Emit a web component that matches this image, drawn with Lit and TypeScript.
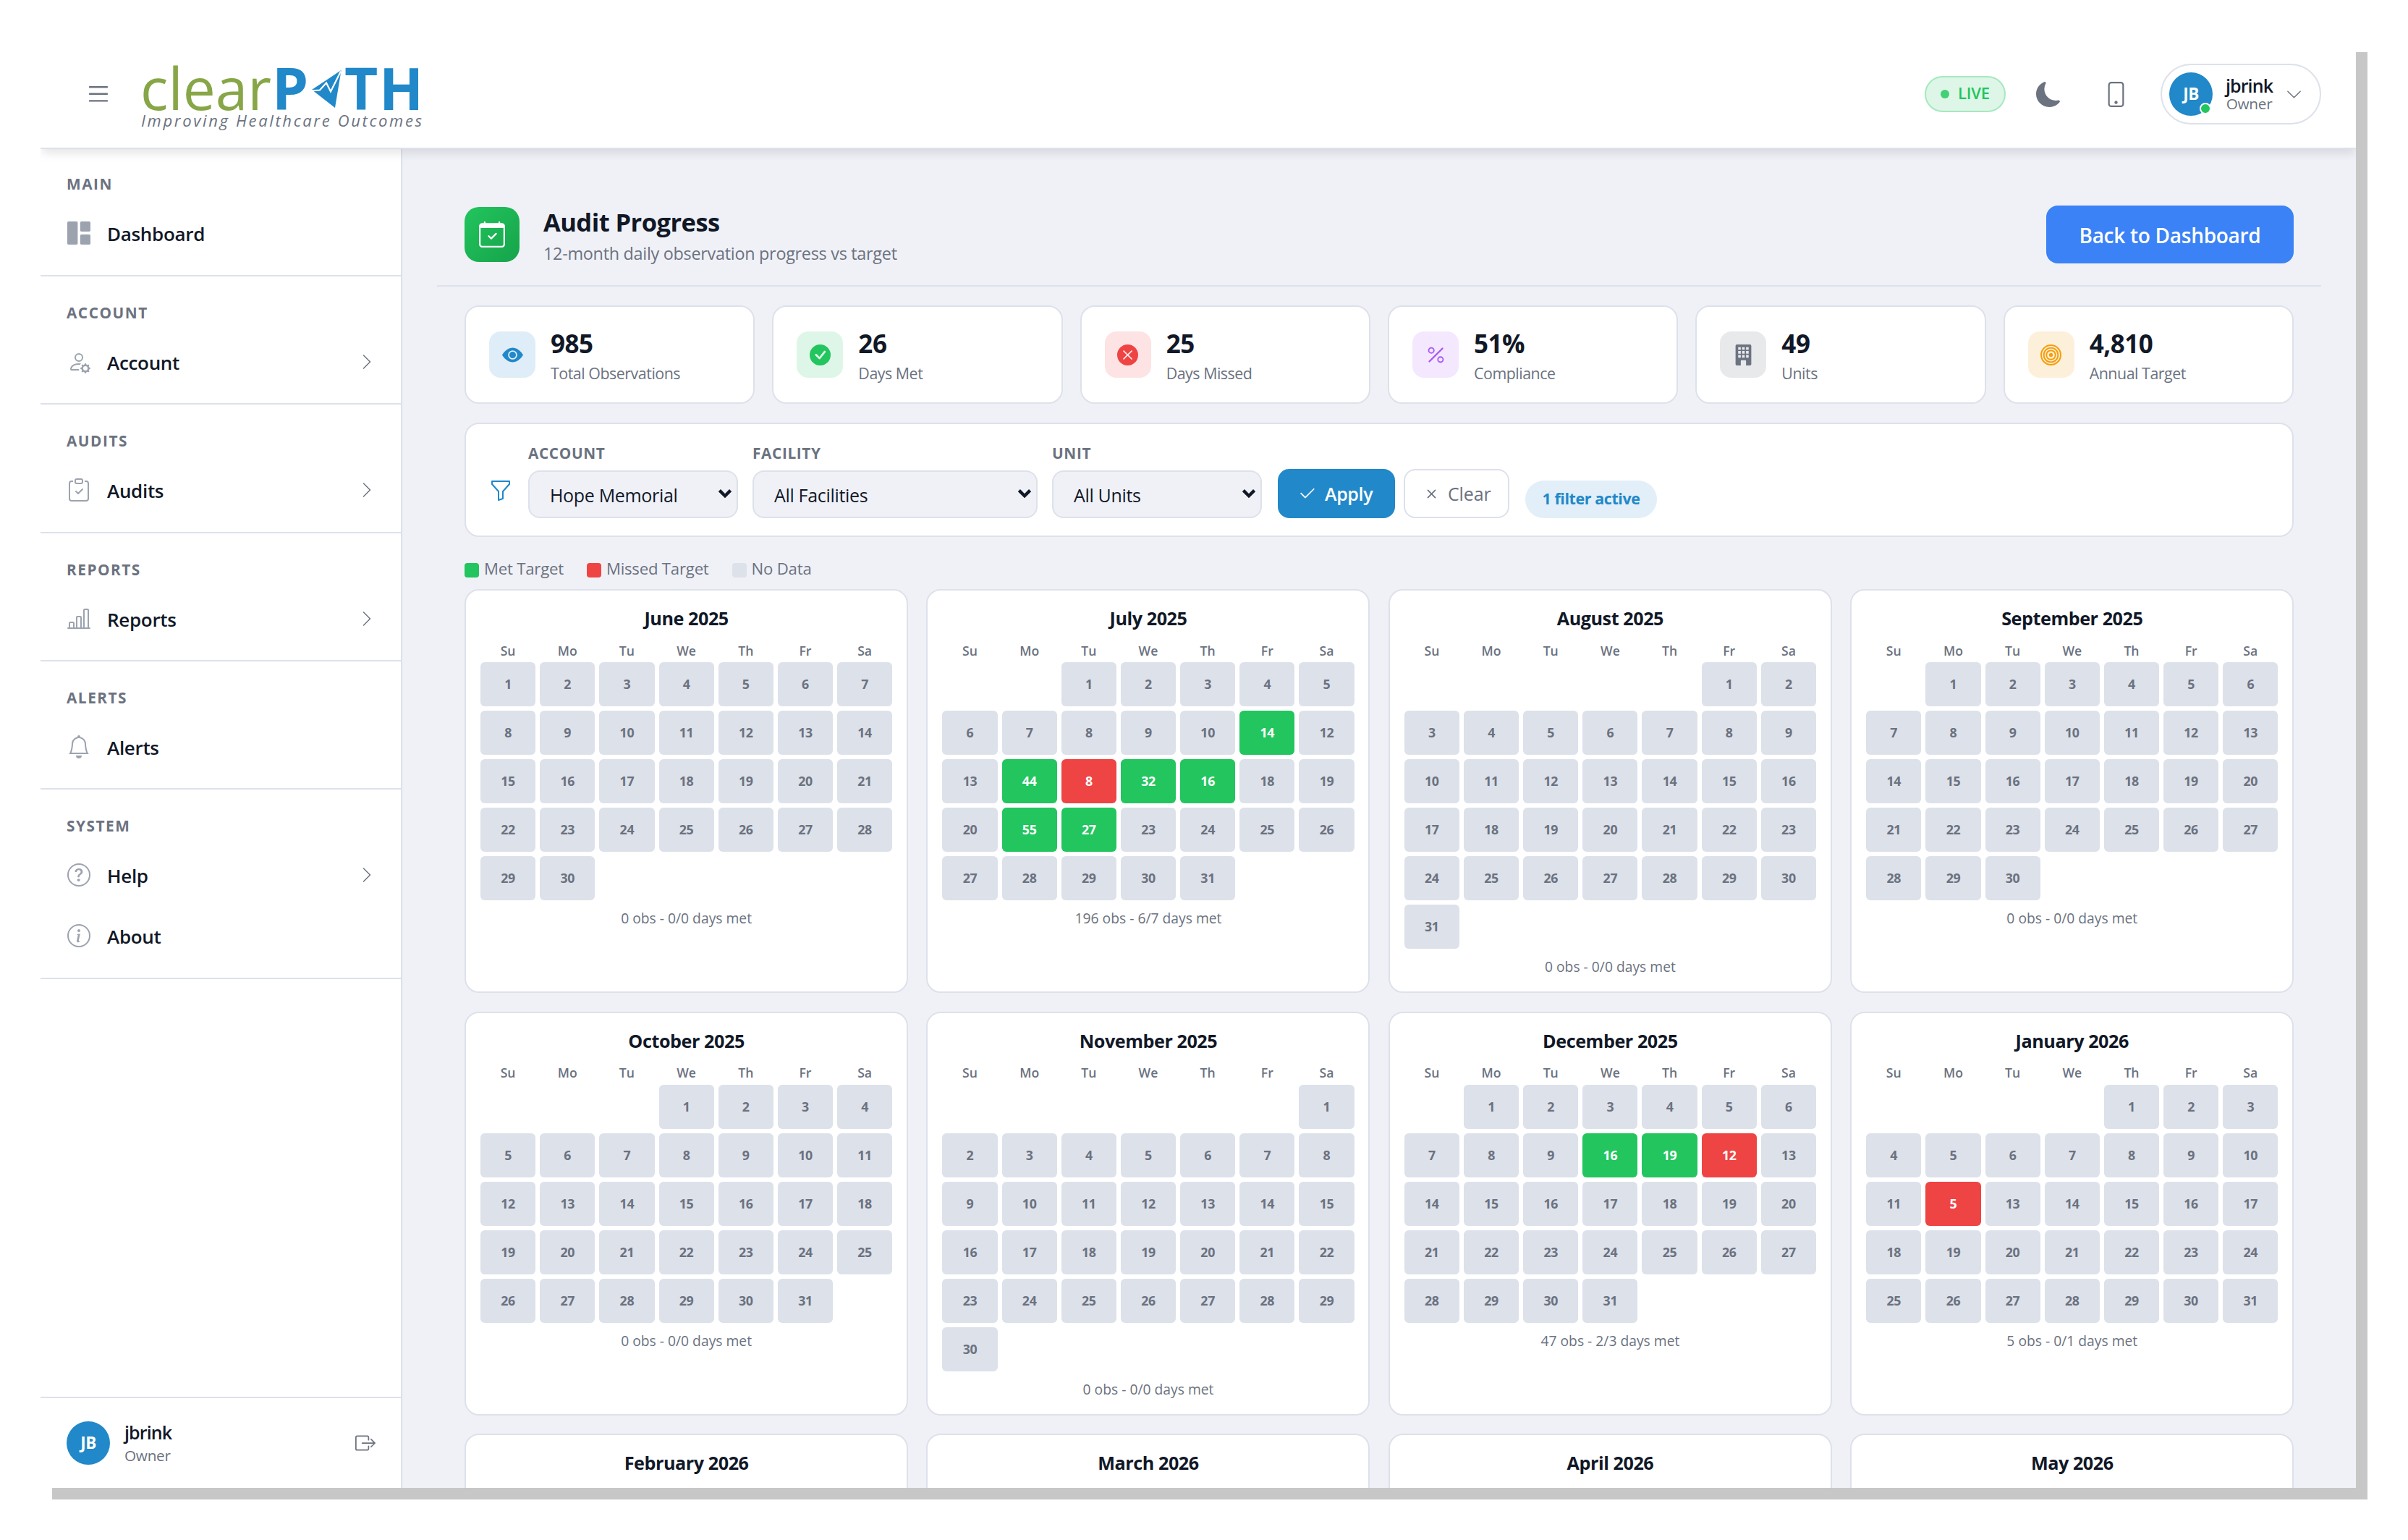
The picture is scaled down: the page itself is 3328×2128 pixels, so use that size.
import { LitElement, html, css, svg, nothing } from 'lit';
import type { TemplateResult, SVGTemplateResult } from 'lit';

const ring = svg`<circle cx="8" cy="8" r="7.5" fill="none" stroke="currentColor" />`;

const ICONS: Record<string, SVGTemplateResult> = {
  moon: svg`<path d="M6 .278a.77.77 0 0 1 .08.858 7.2 7.2 0 0 0-.878 3.46c0 4.021 3.278 7.277 7.318 7.277q.792-.001 1.533-.16a.79.79 0 0 1 .81.316.73.73 0 0 1-.031.893A8.35 8.35 0 0 1 8.344 16C3.734 16 0 12.286 0 7.71 0 4.266 2.114 1.312 5.124.06A.75.75 0 0 1 6 .278" />`,
  phone: svg`<path d="M11 1a1 1 0 0 1 1 1v12a1 1 0 0 1-1 1H5a1 1 0 0 1-1-1V2a1 1 0 0 1 1-1zM5 0a2 2 0 0 0-2 2v12a2 2 0 0 0 2 2h6a2 2 0 0 0 2-2V2a2 2 0 0 0-2-2z" /><circle cx="8" cy="13" r="1" />`,
  'chevron-down': svg`<path d="M1.646 4.646a.5.5 0 0 1 .708 0L8 10.293l5.646-5.647a.5.5 0 0 1 .708.708l-6 6a.5.5 0 0 1-.708 0l-6-6a.5.5 0 0 1 0-.708" />`,
  'chevron-right': svg`<path d="M4.646 1.646a.5.5 0 0 1 .708 0l6 6a.5.5 0 0 1 0 .708l-6 6a.5.5 0 0 1-.708-.708L10.293 8 4.646 2.354a.5.5 0 0 1 0-.708" />`,
  dashboard: svg`<rect x="0" y="0" width="7.2" height="16" rx=".9" /><rect x="8.9" y="0" width="7.1" height="7" rx=".9" /><rect x="8.9" y="9" width="7.1" height="7" rx=".9" />`,
  account: svg`<path d="M11 5a3 3 0 1 1-6 0 3 3 0 0 1 6 0M8 7a2 2 0 1 0 0-4 2 2 0 0 0 0 4m.256 7a4.5 4.5 0 0 1-.229-1.004H3c.001-.246.154-.986.832-1.664C4.484 10.68 5.711 10 8 10q.39 0 .74.025c.226-.341.496-.65.804-.918Q8.844 9.002 8 9c-5 0-6 3-6 4s1 1 1 1zm3.63-4.54c.18-.613 1.048-.613 1.229 0l.043.148a.64.64 0 0 0 .921.382l.136-.074c.561-.306 1.175.308.87.869l-.075.136a.64.64 0 0 0 .382.92l.149.045c.612.18.612 1.048 0 1.229l-.15.043a.64.64 0 0 0-.38.921l.074.136c.305.561-.309 1.175-.87.87l-.136-.075a.64.64 0 0 0-.92.382l-.045.149c-.18.612-1.048.612-1.229 0l-.043-.15a.64.64 0 0 0-.921-.38l-.136.074c-.561.305-1.175-.309-.87-.87l.075-.136a.64.64 0 0 0-.382-.92l-.148-.045c-.613-.18-.613-1.048 0-1.229l.148-.043a.64.64 0 0 0 .382-.921l-.074-.136c-.306-.561.308-1.175.869-.87l.136.075a.64.64 0 0 0 .92-.382zM14 12.5a1.5 1.5 0 1 0-3 0 1.5 1.5 0 0 0 3 0" />`,
  audits: svg`<path d="M10.854 7.146a.5.5 0 0 1 0 .708l-3 3a.5.5 0 0 1-.708 0l-1.5-1.5a.5.5 0 1 1 .708-.708L7.5 9.793l2.646-2.647a.5.5 0 0 1 .708 0" /><path d="M4 1.5H3a2 2 0 0 0-2 2V14a2 2 0 0 0 2 2h10a2 2 0 0 0 2-2V3.5a2 2 0 0 0-2-2h-1v1h1a1 1 0 0 1 1 1V14a1 1 0 0 1-1 1H3a1 1 0 0 1-1-1V3.5a1 1 0 0 1 1-1h1z" /><path d="M9.5 1a.5.5 0 0 1 .5.5v1a.5.5 0 0 1-.5.5h-3a.5.5 0 0 1-.5-.5v-1a.5.5 0 0 1 .5-.5zm-3-1A1.5 1.5 0 0 0 5 1.5v1A1.5 1.5 0 0 0 6.5 4h3A1.5 1.5 0 0 0 11 2.5v-1A1.5 1.5 0 0 0 9.5 0z" />`,
  reports: svg`<path d="M11 2a1 1 0 0 1 1-1h2a1 1 0 0 1 1 1v12h.5a.5.5 0 0 1 0 1H.5a.5.5 0 0 1 0-1H1v-3a1 1 0 0 1 1-1h2a1 1 0 0 1 1 1v3h1V7a1 1 0 0 1 1-1h2a1 1 0 0 1 1 1v7h1zm1 12h2V2h-2zm-3 0V7H7v7zm-5 0v-3H2v3z" />`,
  bell: svg`<path d="M8 16a2 2 0 0 0 2-2H6a2 2 0 0 0 2 2M8 1.918l-.797.161A4 4 0 0 0 4 6c0 .628-.134 2.197-.459 3.742-.16.767-.376 1.566-.663 2.258h10.244c-.287-.692-.502-1.49-.663-2.258C12.134 8.197 12 6.628 12 6a4 4 0 0 0-3.203-3.92zM14.22 12c.223.447.481.801.78 1H1c.299-.199.557-.553.78-1C2.68 10.2 3 6.88 3 6c0-2.42 1.72-4.44 4.005-4.901a1 1 0 1 1 1.99 0A5 5 0 0 1 13 6c0 .88.32 4.2 1.22 6" />`,
  help: svg`${ring}<path d="M5.255 5.786a.237.237 0 0 0 .241.247h.825c.138 0 .248-.113.266-.25.09-.656.54-1.134 1.342-1.134.686 0 1.314.343 1.314 1.168 0 .635-.374.927-.965 1.371-.673.489-1.206 1.06-1.168 1.987l.003.217a.25.25 0 0 0 .25.246h.811a.25.25 0 0 0 .25-.25v-.105c0-.718.273-.927 1.01-1.486.609-.463 1.244-.977 1.244-2.056 0-1.511-1.276-2.241-2.673-2.241-1.267 0-2.655.59-2.75 2.286m1.557 5.763c0 .533.425.927 1.01.927.609 0 1.028-.394 1.028-.927 0-.552-.42-.94-1.029-.94-.584 0-1.009.388-1.009.94" />`,
  info: svg`${ring}<path d="m8.93 6.588-2.29.287-.082.38.45.083c.294.07.352.176.288.469l-.738 3.468c-.194.897.105 1.319.808 1.319.545 0 1.178-.252 1.465-.598l.088-.416c-.2.176-.492.246-.686.246-.275 0-.375-.193-.304-.533zM9 4.5a1 1 0 1 1-2 0 1 1 0 0 1 2 0" />`,
  logout: svg`<path fill-rule="evenodd" d="M10 12.5a.5.5 0 0 1-.5.5h-8a.5.5 0 0 1-.5-.5v-9a.5.5 0 0 1 .5-.5h8a.5.5 0 0 1 .5.5v2a.5.5 0 0 0 1 0v-2A1.5 1.5 0 0 0 9.5 2h-8A1.5 1.5 0 0 0 0 3.5v9A1.5 1.5 0 0 0 1.5 14h8a1.5 1.5 0 0 0 1.5-1.5v-2a.5.5 0 0 0-1 0z" /><path fill-rule="evenodd" d="M15.854 8.354a.5.5 0 0 0 0-.708l-3-3a.5.5 0 0 0-.708.708L14.293 7.5H5.5a.5.5 0 0 0 0 1h8.793l-2.147 2.146a.5.5 0 0 0 .708.708z" />`,
  calendar: svg`<path d="M10.854 7.146a.5.5 0 0 1 0 .708l-3 3a.5.5 0 0 1-.708 0l-1.5-1.5a.5.5 0 1 1 .708-.708L7.5 9.793l2.646-2.647a.5.5 0 0 1 .708 0" /><path d="M3.5 0a.5.5 0 0 1 .5.5V1h8V.5a.5.5 0 0 1 1 0V1h1a2 2 0 0 1 2 2v11a2 2 0 0 1-2 2H2a2 2 0 0 1-2-2V3a2 2 0 0 1 2-2h1V.5a.5.5 0 0 1 .5-.5M1 4v10a1 1 0 0 0 1 1h12a1 1 0 0 0 1-1V4z" />`,
  eye: svg`<path d="M10.5 8a2.5 2.5 0 1 1-5 0 2.5 2.5 0 0 1 5 0" /><path d="M0 8s3-5.5 8-5.5S16 8 16 8s-3 5.5-8 5.5S0 8 0 8m8 3.5a3.5 3.5 0 1 0 0-7 3.5 3.5 0 0 0 0 7" />`,
  'check-circle': svg`<path d="M16 8A8 8 0 1 1 0 8a8 8 0 0 1 16 0m-3.97-3.03a.75.75 0 0 0-1.08.022L7.477 9.417 5.384 7.323a.75.75 0 0 0-1.06 1.06L6.97 11.03a.75.75 0 0 0 1.079-.02l3.992-4.99a.75.75 0 0 0-.01-1.05z" />`,
  'x-circle': svg`<path d="M16 8A8 8 0 1 1 0 8a8 8 0 0 1 16 0M5.354 4.646a.5.5 0 1 0-.708.708L7.293 8l-2.647 2.646a.5.5 0 0 0 .708.708L8 8.707l2.646 2.647a.5.5 0 0 0 .708-.708L8.707 8l2.647-2.646a.5.5 0 0 0-.708-.708L8 7.293z" />`,
  percent: svg`<path d="M13.442 2.558a.625.625 0 0 1 0 .884l-10 10a.625.625 0 1 1-.884-.884l10-10a.625.625 0 0 1 .884 0M4.5 6a1.5 1.5 0 1 1 0-3 1.5 1.5 0 0 1 0 3m0 1a2.5 2.5 0 1 0 0-5 2.5 2.5 0 0 0 0 5m7 6a1.5 1.5 0 1 1 0-3 1.5 1.5 0 0 1 0 3m0 1a2.5 2.5 0 1 0 0-5 2.5 2.5 0 0 0 0 5" />`,
  building: svg`<path fill-rule="evenodd" d="M3 0a1 1 0 0 0-1 1v14a1 1 0 0 0 1 1h3v-3.5a.5.5 0 0 1 .5-.5h3a.5.5 0 0 1 .5.5V16h3a1 1 0 0 0 1-1V1a1 1 0 0 0-1-1zM4 2h2v2H4zM7 2h2v2H7zM10 2h2v2h-2zM4 5h2v2H4zM7 5h2v2H7zM10 5h2v2h-2zM4 8h2v2H4zM7 8h2v2H7zM10 8h2v2h-2z" />`,
  bullseye: svg`<circle cx="8" cy="8" r="7.45" fill="none" stroke="currentColor" stroke-width="1.1" /><circle cx="8" cy="8" r="5.45" fill="none" stroke="currentColor" stroke-width="1.1" /><circle cx="8" cy="8" r="3.45" fill="none" stroke="currentColor" stroke-width="1.1" /><circle cx="8" cy="8" r="1.5" />`,
  funnel: svg`<path d="M1.5 1.5A.5.5 0 0 1 2 1h12a.5.5 0 0 1 .5.5v2a.5.5 0 0 1-.128.334L10 8.692V13.5a.5.5 0 0 1-.342.474l-3 1A.5.5 0 0 1 6 14.5V8.692L1.628 3.834A.5.5 0 0 1 1.5 3.5zm1 .5v1.308l4.372 4.858A.5.5 0 0 1 7 8.5v5.306l2-.666V8.5a.5.5 0 0 1 .128-.334L13.5 3.308V2z" />`,
  check: svg`<path d="M13.854 3.646a.5.5 0 0 1 0 .708l-7 7a.5.5 0 0 1-.708 0l-3.5-3.5a.5.5 0 1 1 .708-.708L6.5 10.293l6.646-6.647a.5.5 0 0 1 .708 0" />`,
  x: svg`<path d="M4.646 4.646a.5.5 0 0 1 .708 0L8 7.293l2.646-2.647a.5.5 0 0 1 .708.708L8.707 8l2.647 2.646a.5.5 0 0 1-.708.708L8 8.707l-2.646 2.647a.5.5 0 0 1-.708-.708L7.293 8 4.646 5.354a.5.5 0 0 1 0-.708" />`,
};

const icon = (name: string, cls = ''): TemplateResult =>
  html`<svg class="icon ${cls}" viewBox="0 0 16 16" fill="currentColor">${ICONS[name]}</svg>`;

const NAV = [
  { title: 'Main', items: [{ icon: 'dashboard', label: 'Dashboard', more: false }] },
  { title: 'Account', items: [{ icon: 'account', label: 'Account', more: true }] },
  { title: 'Audits', items: [{ icon: 'audits', label: 'Audits', more: true }] },
  { title: 'Reports', items: [{ icon: 'reports', label: 'Reports', more: true }] },
  { title: 'Alerts', items: [{ icon: 'bell', label: 'Alerts', more: false }] },
  {
    title: 'System',
    items: [
      { icon: 'help', label: 'Help', more: true },
      { icon: 'info', label: 'About', more: false },
    ],
  },
];

const STATS = [
  { icon: 'eye', tone: 'blue', value: '985', label: 'Total Observations' },
  { icon: 'check-circle', tone: 'green', value: '26', label: 'Days Met' },
  { icon: 'x-circle', tone: 'red', value: '25', label: 'Days Missed' },
  { icon: 'percent', tone: 'purple', value: '51%', label: 'Compliance' },
  { icon: 'building', tone: 'gray', value: '49', label: 'Units' },
  { icon: 'bullseye', tone: 'amber', value: '4,810', label: 'Annual Target' },
];

const FILTERS = [
  { label: 'Account', value: 'Hope Memorial', size: '' },
  { label: 'Facility', value: 'All Facilities', size: 'wide' },
  { label: 'Unit', value: 'All Units', size: '' },
];

interface DayResult {
  count: number;
  met: boolean;
}

interface Month {
  year: number;
  month: number;
  summary?: string;
  results?: Record<number, DayResult>;
}

const met = (count: number): DayResult => ({ count, met: true });
const missed = (count: number): DayResult => ({ count, met: false });
const NO_OBS = '0 obs - 0/0 days met';

// months without a summary are not loaded yet and only show their title
const MONTHS: Month[] = [
  { year: 2025, month: 5, summary: NO_OBS },
  {
    year: 2025,
    month: 6,
    summary: '196 obs - 6/7 days met',
    results: { 11: met(14), 14: met(44), 15: missed(8), 16: met(32), 17: met(16), 21: met(55), 22: met(27) },
  },
  { year: 2025, month: 7, summary: NO_OBS },
  { year: 2025, month: 8, summary: NO_OBS },
  { year: 2025, month: 9, summary: NO_OBS },
  { year: 2025, month: 10, summary: NO_OBS },
  {
    year: 2025,
    month: 11,
    summary: '47 obs - 2/3 days met',
    results: { 10: met(16), 11: met(19), 12: missed(12) },
  },
  { year: 2026, month: 0, summary: '5 obs - 0/1 days met', results: { 12: missed(5) } },
  { year: 2026, month: 1 },
  { year: 2026, month: 2 },
  { year: 2026, month: 3 },
  { year: 2026, month: 4 },
];

const MONTH_NAMES = [
  'January', 'February', 'March', 'April', 'May', 'June',
  'July', 'August', 'September', 'October', 'November', 'December',
];
const WEEKDAYS = ['Su', 'Mo', 'Tu', 'We', 'Th', 'Fr', 'Sa'];

export class MonthCard extends LitElement {
  static properties = {
    data: { attribute: false },
  };

  declare data: Month;

  static styles = css`
    :host {
      display: block;
      box-sizing: border-box;
      height: 558px;
      padding: 19px 19.6px 19.2px 20px;
      background: #fff;
      border: 2px solid #dde1ea;
      border-radius: 20px;
      text-align: center;
    }

    .title {
      margin-bottom: 9.2px;
      font-size: 25.2px;
      font-weight: 700;
      line-height: 38.4px;
      letter-spacing: -0.018em;
      color: #111827;
    }

    .grid {
      display: grid;
      grid-template-columns: repeat(7, 1fr);
      gap: 6px;
    }

    .weekdays {
      font-size: 17.6px;
      font-weight: 650;
      line-height: 32.8px;
      color: #6b7280;
    }

    .day {
      height: 61px;
      border-radius: 6px;
      background: #dde1ea;
      color: #6b7280;
      font-size: 17.8px;
      font-weight: 700;
      line-height: 60px;
      letter-spacing: -0.02em;
    }

    .day.met {
      background: #22c55e;
      color: #fff;
    }

    .day.missed {
      background: #ef4444;
      color: #fff;
    }

    .summary {
      margin-top: 11px;
      font-size: 19.3px;
      line-height: 28.8px;
      color: #6b7280;
    }
  `;

  private _body() {
    const { year, month, summary, results = {} } = this.data;
    const offset = new Date(year, month, 1).getDay();
    const total = new Date(year, month + 1, 0).getDate();
    const blanks = Array.from({ length: offset }, () => html`<span></span>`);
    const days = Array.from({ length: total }, (_, i) => {
      const result = results[i + 1];
      const state = result ? (result.met ? 'met' : 'missed') : '';
      return html`<div class="day ${state}">${result ? result.count : i + 1}</div>`;
    });
    return html`
      <div class="grid weekdays">${WEEKDAYS.map(d => html`<span>${d}</span>`)}</div>
      <div class="grid">${blanks}${days}</div>
      <div class="summary">${summary}</div>
    `;
  }

  protected render() {
    const { year, month, summary } = this.data;
    return html`
      <div class="title">${MONTH_NAMES[month]} ${year}</div>
      ${summary ? this._body() : nothing}
    `;
  }
}

customElements.define('month-card', MonthCard);

export class AppRoot extends LitElement {
  static styles = css`
    :host {
      --border: #dde1ea;
      --text: #111827;
      --muted: #6b7280;
      --brand: #2188c9;
      display: block;
      box-sizing: border-box;
      width: 3328px;
      height: 2128px;
      padding: 56px;
      overflow: hidden;
      background: #fff;
      color: var(--text);
      font-family: 'Open Sans', 'Noto Sans', sans-serif;
      font-stretch: 95%;
    }

    * {
      box-sizing: border-box;
    }

    .window {
      display: flex;
      flex-direction: column;
      width: 3200px;
      height: 2000px;
      overflow: hidden;
      background: #fff;
      box-shadow: 16px 16px 0 #c7c7c7;
    }

    .icon {
      display: block;
      flex: none;
      width: 32px;
      height: 32px;
    }

    /* top bar */
    .topbar {
      position: relative;
      z-index: 1;
      display: flex;
      align-items: center;
      flex: none;
      height: 150px;
      padding: 0 48px 0 60px;
      background: #fff;
      border-bottom: 2px solid var(--border);
      box-shadow: 0 8px 12px -2px rgba(0, 0, 0, 0.1);
    }

    .menu {
      width: 40px;
      height: 40px;
      color: var(--muted);
    }

    .logo {
      display: block;
      width: 400px;
      height: 110px;
      margin-left: 34px;
    }

    .logo .clear {
      font-size: 80px;
      fill: #87a647;
    }

    .logo .path {
      font-size: 80px;
      font-weight: 700;
      fill: var(--brand);
    }

    .logo .tagline {
      font-size: 22px;
      font-style: italic;
      fill: var(--muted);
    }

    .spacer {
      flex: 1;
    }

    .live {
      display: flex;
      align-items: center;
      gap: 12px;
      width: 112px;
      height: 50px;
      padding-left: 20px;
      border: 2px solid #a6e8bf;
      border-radius: 25px;
      background: #def6e7;
      color: #22c55e;
      font-size: 22px;
      font-weight: 600;
      line-height: 44px;
      letter-spacing: -0.01em;
    }

    .live span {
      margin-top: -4px;
    }

    .live::before {
      content: '';
      width: 12px;
      height: 12px;
      border-radius: 50%;
      background: #42cf76;
    }

    .moon,
    .phone {
      width: 35px;
      height: 35px;
      color: var(--muted);
    }

    .moon {
      margin-left: 42px;
    }

    .phone {
      margin-left: 58px;
    }

    .user {
      display: flex;
      align-items: center;
      width: 222px;
      height: 84px;
      margin-left: 44px;
      padding-left: 10px;
      border: 2px solid var(--border);
      border-radius: 42px;
    }

    .avatar {
      position: relative;
      flex: none;
      width: 60px;
      height: 60px;
      border-radius: 50%;
      background: var(--brand);
      color: #fff;
      font-size: 22.5px;
      font-weight: 700;
      line-height: 60px;
      text-align: center;
      letter-spacing: -0.02em;
    }

    .online {
      position: absolute;
      right: 2px;
      bottom: 2px;
      width: 16px;
      height: 16px;
      border: 2px solid #fff;
      border-radius: 50%;
      background: #22c55e;
    }

    .user .who {
      width: 101px;
      text-align: center;
    }

    .name {
      font-size: 25px;
      font-weight: 600;
      line-height: 26px;
      letter-spacing: -0.035em;
    }

    .role {
      font-size: 20.8px;
      line-height: 24px;
      letter-spacing: -0.015em;
      color: var(--muted);
    }

    .user .icon {
      width: 23px;
      height: 23px;
      color: var(--muted);
    }

    /* sidebar */
    .body {
      display: flex;
      flex: 1;
      min-height: 0;
    }

    .sidebar {
      display: flex;
      flex-direction: column;
      flex: none;
      width: 500px;
      border-right: 2px solid var(--border);
      background: #fff;
    }

    nav {
      flex: 1;
      margin-top: -1.6px;
    }

    .section {
      padding: 35px 0 15.4px;
      border-bottom: 2px solid var(--border);
    }

    .section h3 {
      margin: 0 0 11px;
      padding-left: 36px;
      font-size: 20.8px;
      font-weight: 700;
      line-height: 30px;
      letter-spacing: 0.073em;
      text-transform: uppercase;
      color: var(--muted);
    }

    .item {
      display: flex;
      align-items: center;
      height: 84px;
      padding: 0 35px 0 37px;
      font-size: 26px;
      font-weight: 550;
      letter-spacing: -0.012em;
    }

    .item .icon {
      color: #9ca3af;
    }

    .item .label {
      flex: 1;
      margin: 2px 0 0 23px;
    }

    .item .chevron {
      width: 24px;
      height: 24px;
      color: var(--muted);
    }

    .account {
      display: flex;
      align-items: center;
      height: 126px;
      padding: 0 35px 0 36px;
      border-top: 2px solid var(--border);
    }

    .account .who {
      flex: 1;
      margin: 0 0 0 20px;
    }

    .account .name {
      line-height: 34px;
    }

    .account .role {
      line-height: 30px;
    }

    .account .icon {
      width: 28px;
      height: 28px;
      color: var(--muted);
    }

    /* main */
    main {
      flex: 1;
      min-width: 0;
      overflow: hidden;
      padding: 78px 48px 0;
      background: #f0f1f7;
    }

    .page-header {
      display: flex;
      align-items: center;
      height: 112px;
      padding: 0 38px 30px;
      border-bottom: 2px solid var(--border);
    }

    .page-icon {
      display: grid;
      place-items: center;
      width: 76px;
      height: 76px;
      border-radius: 20px;
      background: linear-gradient(135deg, #22c55e, #16a34a);
      color: #fff;
    }

    .page-icon .icon {
      width: 36px;
      height: 36px;
    }

    .heading {
      flex: 1;
      margin: 7px 0 0 33px;
    }

    h1 {
      margin: 0;
      font-size: 34.5px;
      font-weight: 700;
      line-height: 46px;
      letter-spacing: -0.016em;
    }

    .subtitle {
      font-size: 23.4px;
      line-height: 41px;
      letter-spacing: -0.012em;
      color: var(--muted);
    }

    .back {
      width: 342px;
      height: 80px;
      border-radius: 16px;
      background: #3b82f6;
      color: #fff;
      font-size: 28px;
      font-weight: 600;
      line-height: 82px;
      text-align: center;
      letter-spacing: -0.01em;
    }

    .content {
      padding: 26px 38px 0;
    }

    .stats {
      display: grid;
      grid-template-columns: repeat(6, 1fr);
      gap: 24px;
      margin-bottom: 26px;
    }

    .stat {
      display: flex;
      align-items: center;
      gap: 21px;
      height: 136px;
      padding: 0 0 0 32px;
      border: 2px solid var(--border);
      border-radius: 20px;
      background: #fff;
    }

    .stat > :last-child {
      margin-top: 9px;
    }

    .tile {
      display: grid;
      place-items: center;
      width: 64px;
      height: 64px;
      border-radius: 16px;
    }

    .tile .icon {
      width: 29px;
      height: 29px;
    }

    .blue {
      background: #deedf8;
      color: var(--brand);
    }

    .green {
      background: #def6e7;
      color: #22c55e;
    }

    .red {
      background: #fde3e3;
      color: #ef4444;
    }

    .purple {
      background: #f3e8fd;
      color: #a855f7;
    }

    .gray {
      background: #e8e9eb;
      color: var(--muted);
    }

    .amber {
      background: #fdf0db;
      color: #f59e0b;
    }

    .value {
      font-size: 35px;
      font-weight: 700;
      line-height: 42px;
      letter-spacing: -0.013em;
    }

    .caption {
      font-size: 21.4px;
      line-height: 39px;
      letter-spacing: -0.022em;
      color: var(--muted);
    }

    .filters {
      display: flex;
      align-items: flex-end;
      height: 158px;
      padding: 0 32px 24px;
      border: 2px solid var(--border);
      border-radius: 20px;
      background: #fff;
    }

    .filters .funnel {
      margin: 0 22px 22px 0;
      color: var(--brand);
    }

    .field {
      width: 290px;
      margin-right: 20px;
    }

    .field.wide {
      width: 394px;
    }

    .field label {
      display: block;
      margin-bottom: 9px;
      font-size: 20.8px;
      font-weight: 700;
      line-height: 30px;
      letter-spacing: 0.03em;
      text-transform: uppercase;
      color: var(--muted);
    }

    .select {
      display: flex;
      align-items: center;
      justify-content: space-between;
      height: 66px;
      padding: 2px 6px 0 28px;
      border: 2px solid var(--border);
      border-radius: 16px;
      background: #f0f1f7;
      font-size: 25px;
      letter-spacing: -0.013em;
    }

    .select svg {
      width: 20px;
      height: 14px;
      margin-bottom: 5px;
    }

    .btn {
      display: flex;
      align-items: center;
      height: 68px;
      border-radius: 16px;
      font-size: 25px;
      letter-spacing: -0.015em;
    }

    .btn .icon {
      width: 27px;
      height: 27px;
      margin-right: 11px;
    }

    .apply {
      width: 162px;
      margin-left: 2px;
      padding-left: 27px;
      background: var(--brand);
      color: #fff;
      font-weight: 600;
    }

    .reset {
      width: 146px;
      margin-left: 12px;
      padding-left: 23px;
      border: 2px solid var(--border);
      color: var(--muted);
      font-weight: 500;
      letter-spacing: -0.005em;
    }

    .reset .icon {
      margin-right: 9px;
    }

    .badge {
      width: 182px;
      height: 52px;
      margin-left: 22px;
      border-radius: 26px;
      background: #e2eff8;
      color: var(--brand);
      font-size: 21.5px;
      font-weight: 700;
      line-height: 50px;
      text-align: center;
      letter-spacing: -0.02em;
    }

    .legend {
      display: flex;
      align-items: center;
      gap: 32px;
      height: 72px;
      padding-top: 20px;
      font-size: 22.2px;
      line-height: 16px;
      letter-spacing: -0.01em;
      color: var(--muted);
    }

    .legend span {
      display: flex;
      align-items: flex-start;
      gap: 7px;
    }

    .legend i {
      width: 20px;
      height: 20px;
      border-radius: 4px;
    }

    .swatch-met {
      background: #22c55e;
    }

    .swatch-missed {
      background: #ef4444;
    }

    .swatch-none {
      background: var(--border);
    }

    .months {
      display: grid;
      grid-template-columns: repeat(4, 1fr);
      gap: 25.6px;
    }
  `;

  private _topbar() {
    return html`
      <header class="topbar">
        <svg class="menu" viewBox="0 0 40 40" stroke="currentColor" stroke-width="2.4" stroke-linecap="round">
          <path d="M8 10.2H32M8 19.8H32M8 29.4H32" />
        </svg>
        <svg class="logo" viewBox="0 0 400 110">
          <text class="clear" x="4" y="76.5" textLength="181" lengthAdjust="spacingAndGlyphs">clear</text>
          <text class="path" x="186" y="76.5">P</text>
          <text class="path" x="286" y="76.5">T</text>
          <text class="path" x="334" y="76.5">H</text>
          <path d="M241 49 281.6 22 273 74Z" fill="#2188c9" />
          <path d="M239 50.5 252 49.5 261 39.5 267 51.5 281 23.5" fill="none" stroke="#fff" stroke-width="2.2" />
          <text class="tagline" x="5" y="99.5" textLength="388">Improving Healthcare Outcomes</text>
        </svg>
        <div class="spacer"></div>
        <div class="live"><span>LIVE</span></div>
        ${icon('moon', 'moon')} ${icon('phone', 'phone')}
        <div class="user">
          <div class="avatar">JB<span class="online"></span></div>
          <div class="who">
            <div class="name">jbrink</div>
            <div class="role">Owner</div>
          </div>
          ${icon('chevron-down')}
        </div>
      </header>
    `;
  }

  private _sidebar() {
    return html`
      <aside class="sidebar">
        <nav>
          ${NAV.map(section => html`
            <div class="section">
              <h3>${section.title}</h3>
              ${section.items.map(item => html`
                <div class="item">
                  ${icon(item.icon)}
                  <span class="label">${item.label}</span>
                  ${item.more ? icon('chevron-right', 'chevron') : nothing}
                </div>
              `)}
            </div>
          `)}
        </nav>
        <div class="account">
          <div class="avatar">JB</div>
          <div class="who">
            <div class="name">jbrink</div>
            <div class="role">Owner</div>
          </div>
          ${icon('logout')}
        </div>
      </aside>
    `;
  }

  private _filters() {
    return html`
      <div class="filters">
        ${icon('funnel', 'funnel')}
        ${FILTERS.map(f => html`
          <div class="field ${f.size}">
            <label>${f.label}</label>
            <div class="select">
              ${f.value}
              <svg viewBox="0 0 20 14" fill="none" stroke="currentColor" stroke-width="4.4">
                <path d="M2.4 2.6 10 10.2 17.6 2.6" />
              </svg>
            </div>
          </div>
        `)}
        <div class="btn apply">${icon('check')}Apply</div>
        <div class="btn reset">${icon('x')}Clear</div>
        <div class="badge">1 filter active</div>
      </div>
    `;
  }

  protected render() {
    return html`
      <div class="window">
        ${this._topbar()}
        <div class="body">
          ${this._sidebar()}
          <main>
            <div class="page-header">
              <div class="page-icon">${icon('calendar')}</div>
              <div class="heading">
                <h1>Audit Progress</h1>
                <div class="subtitle">12-month daily observation progress vs target</div>
              </div>
              <div class="back">Back to Dashboard</div>
            </div>
            <div class="content">
              <div class="stats">
                ${STATS.map(s => html`
                  <div class="stat">
                    <div class="tile ${s.tone}">${icon(s.icon)}</div>
                    <div>
                      <div class="value">${s.value}</div>
                      <div class="caption">${s.label}</div>
                    </div>
                  </div>
                `)}
              </div>
              ${this._filters()}
              <div class="legend">
                <span><i class="swatch-met"></i>Met Target</span>
                <span><i class="swatch-missed"></i>Missed Target</span>
                <span><i class="swatch-none"></i>No Data</span>
              </div>
              <div class="months">
                ${MONTHS.map(m => html`<month-card .data=${m}></month-card>`)}
              </div>
            </div>
          </main>
        </div>
      </div>
    `;
  }
}

customElements.define('app-root', AppRoot);
